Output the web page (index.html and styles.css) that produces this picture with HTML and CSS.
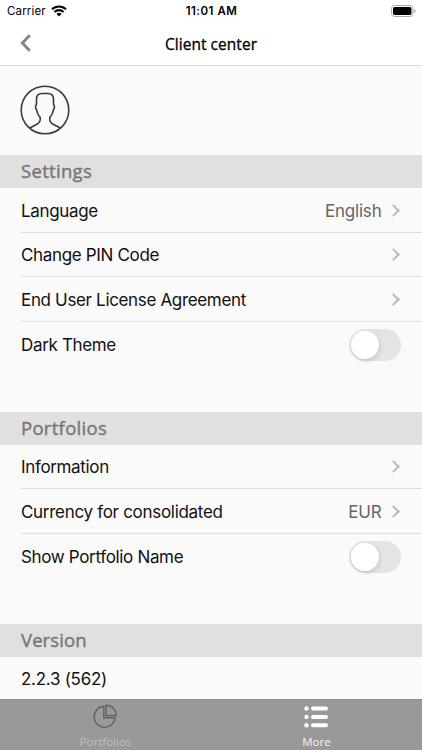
FILE: index.html
```html
<!DOCTYPE html>
<html lang="en">
<head>
<meta charset="utf-8">
<title>Client center</title>
<link rel="stylesheet" href="styles.css">
</head>
<body>
<div class="screen">
  <header class="top">
    <div class="status">
      <div class="carrier"><span>Carrier</span>
        <svg width="16" height="12" viewBox="0 0 16 12"><path d="M1 4.3a10 10 0 0 1 14 0M3.4 7a6.6 6.6 0 0 1 9.2 0" fill="none" stroke="#000" stroke-width="2.1"/><path d="M5.5 9a3.7 3.7 0 0 1 5 0L8 11.5z"/></svg>
      </div>
      <div class="time">11:01 AM</div>
      <svg class="battery" width="25" height="12" viewBox="0 0 25 12"><rect x=".5" y=".5" width="21.5" height="11" rx="3" fill="#fff" stroke="#aaa"/><rect x="2" y="2" width="18.5" height="8" rx="1.7"/><path d="M23.3 4v4q1.3-.7 1.3-2t-1.3-2" fill="#999"/></svg>
    </div>
    <div class="nav">
      <svg class="back" width="12" height="18" viewBox="0 0 12 18"><path d="M9.7 1.2 2.4 9l7.3 7.8" fill="none" stroke="#858585" stroke-width="3"/></svg>
      <h1>Client center</h1>
    </div>
  </header>
  <main>
    <div class="profile">
      <svg width="50" height="50" viewBox="0 0 50 50" fill="none" stroke="#3b3b3b" stroke-width="1.6"><circle cx="25" cy="25" r="23.8"/><path d="M9.7 43 16 39.7C19 38.2 20.2 36.8 20.2 34.8V32.6C18 30 17 27.6 16.7 25.3 15.6 24 15.5 22.5 15.5 21L16.5 19.3V14C16.5 10.5 18.5 8.5 22 8.5H28C31.5 8.5 33.5 10.5 33.5 14V19.3L34.5 21C34.5 22.5 34.4 24 33.3 25.3 33 27.6 32 30 29.8 32.6V34.8C29.8 36.8 31 38.2 34 39.7L40.3 43"/></svg>
    </div>
    <section class="settings">
      <h2>Settings</h2>
      <div class="row"><span class="language">Language</span><span class="value english">English</span><i class="chevron"></i></div>
      <div class="row"><span class="pin">Change PIN Code</span><i class="chevron"></i></div>
      <div class="row"><span class="license">End User License Agreement</span><i class="chevron"></i></div>
      <div class="row"><span class="dark">Dark Theme</span><i class="toggle"></i></div>
    </section>
    <section class="portfolios">
      <h2>Portfolios</h2>
      <div class="row"><span class="info">Information</span><i class="chevron"></i></div>
      <div class="row"><span class="currency">Currency for consolidated</span><span class="value eur">EUR</span><i class="chevron"></i></div>
      <div class="row"><span class="show">Show Portfolio Name</span><i class="toggle"></i></div>
    </section>
    <section class="version">
      <h2>Version</h2>
      <div class="row"><span class="number">2.2.3 (562)</span></div>
    </section>
  </main>
  <nav class="tabs">
    <div class="tab">
      <svg width="24" height="25" viewBox="0 0 24 25" fill="none" stroke="#606060" stroke-width="1.4"><path d="M10.8 2.2A10.6 10.6 0 1 0 22.2 13.8H10.8z"/><path d="M13 1.2v10.3h10.2C23 5.4 18.7 1.2 13 1.2z"/></svg>
      <span>Portfolios</span>
    </div>
    <div class="tab active">
      <svg width="24" height="25" viewBox="0 0 24 25" fill="#fff"><circle cx="2.5" cy="4.5" r="2.2"/><circle cx="2.5" cy="12.9" r="2.2"/><circle cx="2.5" cy="21.2" r="2.2"/><rect x="7" y="2.5" width="17" height="4" rx="2"/><rect x="7" y="10.9" width="17" height="4" rx="2"/><rect x="7" y="19.2" width="17" height="4" rx="2"/></svg>
      <span>More</span>
    </div>
  </nav>
</div>
</body>
</html>
```
FILE: styles.css
```css
* { box-sizing: border-box; }
body { margin: 0; background: #fafafa; color: #111; font-family: Inter, "Liberation Sans", sans-serif; }
.screen { width: 422px; height: 750px; display: flex; flex-direction: column; overflow: hidden; }
.top { height: 66px; flex: none; background: #fff; border-bottom: 1px solid #dedede; }
.status { height: 22px; padding: 0 6px 0 7px; display: grid; grid-template-columns: 1fr auto 1fr; align-items: center; font-size: 11.5px; color: #000; }
.carrier { display: flex; align-items: center; gap: 5px; letter-spacing: .15px; }
.time { font-weight: 600; letter-spacing: .5px; }
.battery { justify-self: end; }
.nav { height: 43px; display: grid; grid-template-columns: 1fr auto 1fr; align-items: center; }
.back { margin-left: 20px; margin-top: -2px; }
h1 { margin: 0; font: 400 15.5px/22px "Open Sans", sans-serif; color: #000; letter-spacing: .05px; -webkit-text-stroke: .3px #000; }
main { flex: 1; min-height: 0; }
.profile { height: 89px; padding: 19px 0 0 20px; }
.settings { height: 256.5px; }
.portfolios { height: 212px; }
h2 { margin: 0; height: 33px; padding-left: 21px; background: #e0e0e0; color: #777; font: 400 18.5px/32px "Open Sans", sans-serif; letter-spacing: .3px; -webkit-text-stroke: .4px #777; }
.version h2 { letter-spacing: .1px; }
.row { height: 44.67px; margin-left: 21px; padding-right: 21px; display: flex; align-items: center; border-bottom: 1px solid #dedede; font-size: 17px; letter-spacing: -.34px; white-space: nowrap; }
.row > span { padding-top: 2px; }
.row:last-child { border-bottom: 0; }
.currency { letter-spacing: -.3px; }
.row > .number { letter-spacing: -.28px; padding-top: 0; }
.value { margin-left: auto; margin-right: 7.5px; color: #666; letter-spacing: -.2px; }
.chevron { width: 9px; height: 9px; margin-top: 1px; border: solid #b9b9bb; border-width: 2px 2px 0 0; transform: rotate(45deg); margin-right: 3px; }
.row > span:first-child + i { margin-left: auto; }
.toggle { width: 52px; height: 32px; margin-top: 1px; border-radius: 16px; background: #e4e4e6; padding: 2px; }
.toggle::before { content: ""; display: block; width: 28px; height: 28px; border-radius: 50%; background: #fff; box-shadow: 1px 2px 4px rgba(0,0,0,.13); }
.tabs { height: 51px; flex: none; background: #999; border-top: 1px solid #8e8e8e; display: flex; }
.tab { flex: 1; display: flex; flex-direction: column; align-items: center; padding-top: 4px; font: 400 11.5px/16px "Open Sans", sans-serif; color: #bdbdbd; }
.tab svg { margin-right: 1px; }
.tab span { margin-top: 5px; }
.active { color: #f4f4f4; }
```
